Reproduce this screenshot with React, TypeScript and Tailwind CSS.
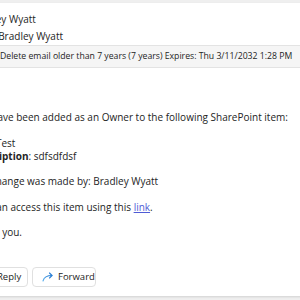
import React from "react";

function ReplyIcon() {
  return (
    <svg width="12" height="10" viewBox="0 0 12 10" fill="none">
      <path d="M11 9 C10 5, 7 3.5, 2 3.5" stroke="#7a6fd6" strokeWidth="1.1" strokeLinecap="round" />
      <path d="M4.5 1 L2 3.5 L4.5 6" stroke="#7a6fd6" strokeWidth="1.1" strokeLinecap="round" strokeLinejoin="round" />
    </svg>
  );
}

function ForwardIcon() {
  return (
    <svg width="12" height="10" viewBox="0 0 12 10" fill="none">
      <defs>
        <linearGradient id="fg" x1="0" y1="1" x2="1" y2="0">
          <stop offset="0" stopColor="#5ab0ee" />
          <stop offset="1" stopColor="#2a7fd4" />
        </linearGradient>
      </defs>
      <path d="M1 9 C2 5, 5 3.5, 10 3.5" stroke="url(#fg)" strokeWidth="1.1" strokeLinecap="round" />
      <path d="M7.5 1 L10 3.5 L7.5 6" stroke="#2a7fd4" strokeWidth="1.1" strokeLinecap="round" strokeLinejoin="round" />
    </svg>
  );
}

export default function App() {
  return (
    <div
      className="w-[300px] h-[300px] overflow-hidden bg-[#efefef] pt-[3px] text-[#242424]"
      style={{ fontFamily: '"Open Sans", "Noto Sans", sans-serif' }}
    >
      <div className="h-[293px] w-[360px] -ml-[29px] bg-white flex flex-col shadow-[0_1px_2px_rgba(0,0,0,0.12)]">
        <div className="pt-[8px] text-[10px]">
          <div className="h-[17px] leading-[17px]">Bradley Wyatt</div>
          <div className="h-[17px] leading-[17px] flex gap-[13px]">
            <span>To:</span>
            <span>Bradley Wyatt</span>
          </div>
        </div>
        <div className="h-[23px] bg-[#f5f5f5] border-y border-[#e3e3e3] flex items-center pl-[31px] text-[8.7px] -ml-[2px]">
          Delete email older than 7 years (7 years) Expires: Thu 3/11/2032 1:28 PM
        </div>
        <div className="mt-[43px] text-[10px] leading-[13px] flex flex-col gap-[12.5px]">
          <p>You have been added as an Owner to the following SharePoint item:</p>
          <div>
            <p>Title: Test</p>
            <p>
              <span className="font-bold">Description</span>: sdfsdfdsf
            </p>
          </div>
          <p>The change was made by: Bradley Wyatt</p>
          <p>
            You can access this item using this{" "}
            <span className="text-[#4f5bd5] underline">link</span>.
          </p>
          <p>Thank you.</p>
        </div>
        <div className="mt-[28px] flex gap-[4px] text-[9.5px]">
          <div className="h-[20px] w-[57px] border border-[#e0e0e0] rounded-[4px] flex items-center gap-[5px] pl-[8px]">
            <ReplyIcon />
            <span>Reply</span>
          </div>
          <div className="h-[20px] w-[64px] border border-[#e0e0e0] rounded-[4px] flex items-center gap-[4px] pl-[9px]">
            <ForwardIcon />
            <span>Forward</span>
          </div>
        </div>
      </div>
    </div>
  );
}
